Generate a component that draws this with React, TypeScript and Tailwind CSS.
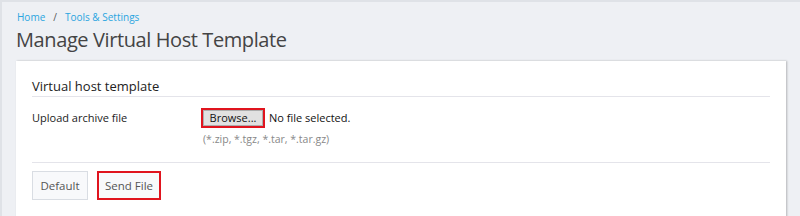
import React from "react";

const App: React.FC = () => {
  return (
    <div
      className="w-[800px] h-[216px] overflow-hidden bg-[#eef0f4] border-l-2 border-t-2 border-[#dfe2e7] text-[#333]"
      style={{ fontFamily: '"Open Sans", sans-serif' }}
    >
      <div className="pl-[15px] pt-[8px] text-[10px] leading-[14px] text-[#2ba5e0]">
        <span>Home</span>
        <span className="mx-[8px] text-[#555]">/</span>
        <span>Tools &amp; Settings</span>
      </div>
      <h1 className="pl-[14px] mt-[3px] text-[20px] leading-[26px] tracking-[-0.4px] text-[#444]">
        Manage Virtual Host Template
      </h1>
      <div className="ml-[14px] mr-[14px] mt-[8px] bg-white shadow-[1px_0_2px_rgba(0,0,0,0.25)] h-[200px] px-[16px] pt-[16px]">
        <div className="text-[13px] leading-[18px] text-[#222] pb-[1px] border-b border-[#e4e4ea]">
          Virtual host template
        </div>
        <div className="flex pt-[11px] pb-[16px] border-b border-[#e4e4ea] text-[11px]">
          <div className="w-[169px] leading-[20px] text-[#222]">Upload archive file</div>
          <div>
            <div className="flex items-center h-[20px]">
              <span className="border-2 border-[#e0141e] inline-flex">
                <span className="bg-[#e1e1e1] border border-[#adadad] w-[60px] text-center h-[16px] leading-[14px] text-[11px] text-[#111]">
                  Browse...
                </span>
              </span>
              <span className="ml-[4px] text-[#111]">No file selected.</span>
            </div>
            <div className="mt-[4px] ml-[2px] leading-[14px] text-[10.5px] text-[#888]">
              (*.zip, *.tgz, *.tar, *.tar.gz)
            </div>
          </div>
        </div>
        <div className="flex gap-[9px] pt-[8px]">
          <button className="h-[29px] w-[56px] border border-[#d9dde3] bg-[#f8f9fb] text-[11.5px] text-[#555]">
            Default
          </button>
          <button className="h-[29px] w-[64px] border-2 border-[#e0141e] bg-[#f8f9fb] text-[11.5px] text-[#555]">
            Send File
          </button>
        </div>
      </div>
    </div>
  );
};

export default App;
